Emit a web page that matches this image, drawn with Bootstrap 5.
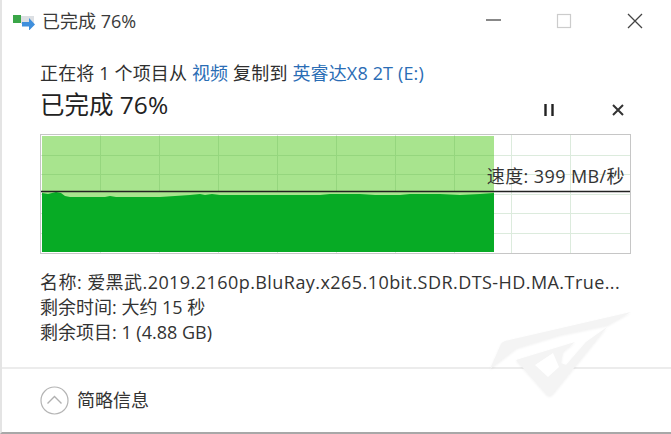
<!DOCTYPE html>
<html lang="zh-CN">
<head>
    <meta charset="UTF-8">
    <meta name="viewport" content="width=device-width, initial-scale=1.0">
    <title>已完成 76%</title>
    <link href="https://cdn.jsdelivr.net/npm/bootstrap@5.3.0/dist/css/bootstrap.min.css" rel="stylesheet">
    <style>
        html, body { height: 100%; }
        body {
            font-family: "Open Sans", "Noto Sans CJK SC", sans-serif;
            color: #333;
            background: #fff;
            overflow: hidden;
        }
        .copy-window {
            position: relative;
            width: 671px;
            height: 434px;
            border-left: 2px solid #e4e4e4;
            border-bottom: 2px solid #a8a8a8;
            overflow: hidden;
        }
        .title-bar { height: 42px; padding-left: 10px; font-size: 18px; color: #3a3a3a; flex: none; }
        .title-icon { width: 24px; height: 18px; margin-right: 6px; }
        .win-btns { padding-right: 28px; gap: 55px; }
        .main-area { padding: 19px 38px 0; height: 325px; flex: none; }
        .from-line { font-size: 18px; line-height: 24px; letter-spacing: .15px; color: #2f2f2f; white-space: nowrap; }
        .from-line a { color: #2a6db5; text-decoration: none; }
        .head-row { margin-top: 5px; height: 30px; }
        .done-head { font-size: 24.5px; line-height: 30px; color: #222; }
        .ctrl-btns { gap: 57px; padding-right: 9px; margin-top: 10px; }
        .chart-box { position: relative; width: 591px; height: 120px; margin-top: 14px; }
        .chart-box svg { display: block; }
        .speed-tag {
            position: absolute;
            right: 6px;
            top: 30px;
            font-size: 18px;
            line-height: 24px;
            letter-spacing: .4px;
            color: #333;
            white-space: nowrap;
        }
        .file-info { margin-top: 16px; font-size: 18px; line-height: 25px; color: #333; white-space: nowrap; }
        .name-line { letter-spacing: .44px; }
        .foot-bar {
            height: 65px;
            padding-left: 38px;
            border-top: 2px solid #ececec;
            font-size: 18px;
            color: #333;
            gap: 8px;
            flex: none;
        }
        .water-mark { position: absolute; left: 476px; top: 300px; filter: drop-shadow(0 1px 1px rgba(0, 0, 0, .06)); }
    </style>
</head>
<body>
    <div class="copy-window d-flex flex-column">
        <div class="title-bar d-flex align-items-center">
            <svg class="title-icon" viewBox="0 0 24 18">
                <rect x="1" y="3" width="8" height="8" fill="#3aa648"/>
                <rect x="9" y="4" width="13" height="8" fill="#dcdfe3"/>
                <path d="M11 12h7V8l6 6.5-6 6v-4h-7z" fill="#3f8fdc" transform="translate(-1 -2)"/>
            </svg>
            <span>已完成 76%</span>
            <div class="win-btns d-flex align-items-center ms-auto">
                <svg width="16" height="16" viewBox="0 0 16 16"><path d="M1 7h15" stroke="#555" stroke-width="1.4"/></svg>
                <svg width="16" height="16" viewBox="0 0 16 16"><rect x="1.5" y="1.5" width="13" height="13" fill="none" stroke="#ccc" stroke-width="1.2"/></svg>
                <svg width="16" height="16" viewBox="0 0 16 16"><path d="M1 1l14 14M15 1L1 15" stroke="#444" stroke-width="1.3"/></svg>
            </div>
        </div>

        <div class="main-area">
            <div class="from-line">正在将 1 个项目从 <a href="#">视频</a> 复制到 <a href="#">英睿达X8 2T (E:)</a></div>
            <div class="head-row d-flex justify-content-between align-items-center">
                <div class="done-head">已完成 76%</div>
                <div class="ctrl-btns d-flex align-items-center">
                    <svg width="12" height="12" viewBox="0 0 12 12"><path d="M2.5 0v12M9.5 0v12" stroke="#222" stroke-width="2.4"/></svg>
                    <svg width="12" height="12" viewBox="0 0 12 12"><path d="M1 1l10 10M11 1L1 11" stroke="#333" stroke-width="2"/></svg>
                </div>
            </div>
            <div class="chart-box">
                <svg width="591" height="120" viewBox="0 0 591 120">
                    <rect x="0.5" y="0.5" width="590" height="119" fill="#fff" stroke="#c6c6c6"/>
                    <path d="M60.5 1v118M119.5 1v118M178.5 1v118M237.5 1v118M296.5 1v118M355.5 1v118M414.5 1v118M471.5 1v118M530.5 1v118" stroke="#dcebdd"/>
                    <path d="M1 21.5h589M1 40.5h589M1 60.5h589M1 79.5h589M1 99.5h589" stroke="#dcebdd"/>
                    <rect x="2" y="2" width="452" height="116" fill="#a8e48e"/>
                    <path d="M60.5 2v56M119.5 2v56M178.5 2v56M237.5 2v56M296.5 2v56M355.5 2v56M414.5 2v56M2 21.5h452M2 40.5h452" stroke="#95d67e"/>
                    <path d="M2 118V59L8 60 12 59 16 58 21 59 25 62 30 63H65L70 62 76 63H115L120 63 135 62 150 61 160 60 165 61 172 60 180 61H280L290 60H320L335 61H360L370 60H400L420 61 440 60 454 59V118Z" fill="#07ab25"/>
                    <path d="M1 57.5h589" stroke="#222" stroke-width="1.3"/>
                </svg>
                <div class="speed-tag">速度: 399 MB/秒</div>
            </div>
            <div class="file-info">
                <div class="name-line">名称: 爱黑武.2019.2160p.BluRay.x265.10bit.SDR.DTS-HD.MA.True...</div>
                <div>剩余时间: 大约 15 秒</div>
                <div>剩余项目: 1 (4.88 GB)</div>
            </div>
        </div>

        <div class="foot-bar d-flex align-items-center">
            <svg width="29" height="29" viewBox="0 0 29 29">
                <circle cx="14.5" cy="14.5" r="13.5" fill="#fff" stroke="#b4b4b4" stroke-width="1.2"/>
                <path d="M7.5 17.5l7-7 7 7" fill="none" stroke="#b0b0b0" stroke-width="1.4"/>
            </svg>
            <span>简略信息</span>
        </div>

        <svg class="water-mark" width="160" height="102" viewBox="478 300 160 102">
            <path d="M490 369l11-25q1-2 4-3l126-29-23 13-48 10-43 13z" fill="#f4f4f4"/>
            <path d="M516 360l59-18-12 10-2 11 5 2 20-23 21-15-54 67q-3 3-6 1z" fill="#f4f4f4"/>
            <path d="M535 365l18-12 6 14-11 10z" fill="#fff"/>
        </svg>
    </div>
</body>
</html>
